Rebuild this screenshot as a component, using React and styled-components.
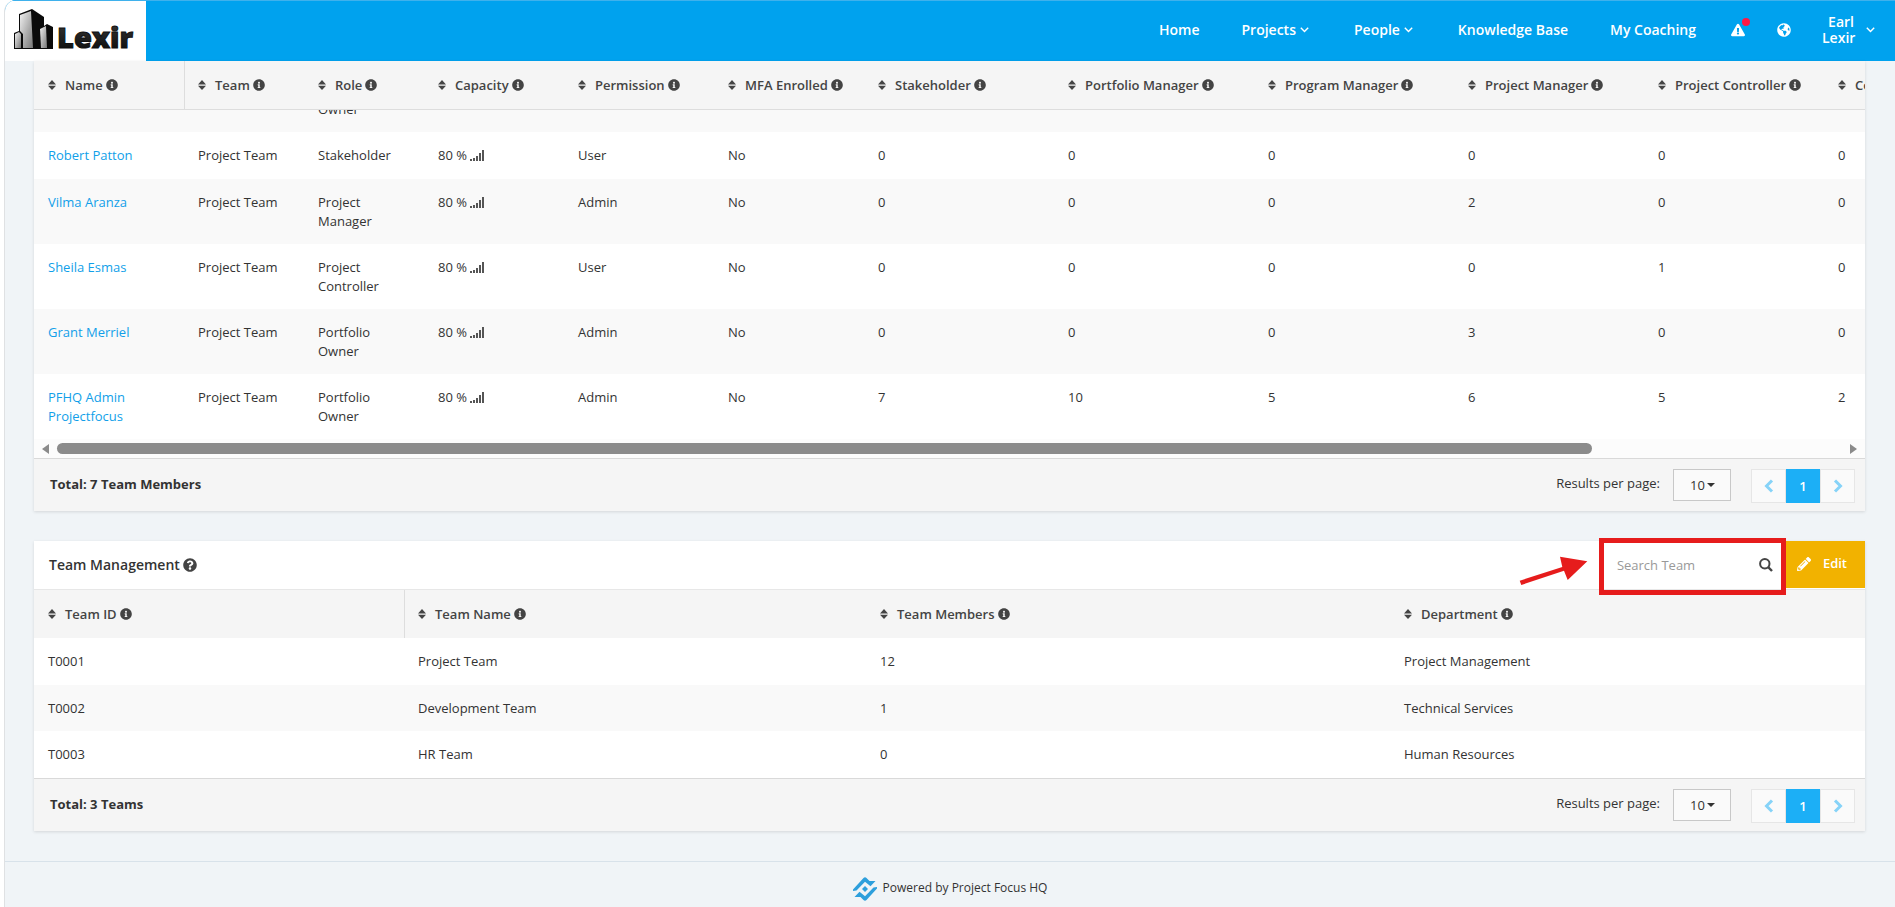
import React, { useEffect, useRef } from 'react';
import styled, { createGlobalStyle } from 'styled-components';
import {
  FaExclamationTriangle,
  FaGlobeAmericas,
  FaInfoCircle,
  FaPencilAlt,
  FaQuestionCircle,
} from 'react-icons/fa';

const GlobalStyle = createGlobalStyle`
  * {
    box-sizing: border-box;
  }
  body {
    margin: 0;
    background: #ffffff;
    color: #333333;
    font-family: "Open Sans", "Noto Sans", sans-serif;
    font-size: 13px;
    line-height: 19px;
  }
  button, input, select {
    font: inherit;
    color: inherit;
  }
  svg {
    display: block;
    flex: none;
  }
`;

const Frame = styled.div`
  display: flex;
  flex-direction: column;
  min-height: 100vh;
  margin-left: 4px;
  border-left: 1px solid #dfe1e3;
  border-top-left-radius: 12px;
  background: #f0f4f7;
  overflow: hidden;
`;

const TopBar = styled.header`
  display: flex;
  align-items: stretch;
  justify-content: space-between;
  height: 61px;
  border-top: 1px solid #3fb1ec;
  background: #00a2ee;
`;

const LogoLink = styled.a`
  display: flex;
  align-items: center;
  width: 141px;
  padding-left: 8px;
  background: #ffffff;
`;

const Nav = styled.nav`
  display: flex;
  align-items: center;
  padding: 0 20px 3px 0;
  color: #ffffff;
  font-size: 14px;
  font-weight: 600;
`;

const NavLink = styled.a`
  display: flex;
  align-items: center;
  gap: 4px;
  padding: 0 ${props => (props.$menu ? 24 : 21)}px 0 21px;
  color: #ffffff;
  text-decoration: none;
`;

const IconButton = styled.button`
  position: relative;
  margin: 0 0 0 ${props => props.$gap}px;
  padding: 0;
  border: 0;
  background: none;
  color: #ffffff;
  font-size: 14px;
`;

const AlertDot = styled.span`
  position: absolute;
  top: -5px;
  right: -5px;
  width: 8px;
  height: 8px;
  border-radius: 50%;
  background: #ff1744;
`;

const UserButton = styled.button`
  display: flex;
  align-items: center;
  gap: 12px;
  margin-left: 31px;
  padding: 0;
  border: 0;
  background: none;
  line-height: 16px;
  text-align: right;
`;

const UserName = styled.span`
  width: 32px;
`;

const Content = styled.main`
  display: flex;
  flex: 1;
  flex-direction: column;
  gap: 30px;
  padding: 0 30px 30px 29px;
`;

const Card = styled.section`
  background: #ffffff;
  box-shadow: 0 1px 3px rgba(0, 0, 0, 0.12);
`;

const CardHead = styled.div`
  display: flex;
  justify-content: space-between;
  height: 49px;
  padding-bottom: 1px;
  border-bottom: 1px solid #e7e7e7;
`;

const CardTitle = styled.h2`
  display: flex;
  align-items: center;
  gap: 3px;
  margin: 0;
  padding-left: 15px;
  font-size: 14px;
  font-weight: 600;
`;

const Actions = styled.div`
  display: flex;
`;

const SearchBox = styled.label`
  position: relative;
  display: flex;
  align-items: center;
  width: 186px;
  padding: 0 13px 0 17px;
  color: #444444;
`;

const SearchInput = styled.input`
  flex: 1;
  min-width: 0;
  padding: 2px 0 0;
  border: 0;
  outline: 0;
  background: none;

  &::placeholder {
    color: #999999;
    opacity: 1;
  }
`;

const Highlight = styled.span`
  position: absolute;
  inset: -3px 0 -7px -1px;
  border: 5px solid #e61c1c;
  pointer-events: none;
`;

const Pointer = styled.svg`
  position: absolute;
  top: 14px;
  left: -82px;
  pointer-events: none;
`;

const EditButton = styled.button`
  display: flex;
  align-items: center;
  gap: 12px;
  padding: 0 18px 2px 11px;
  border: 0;
  background: #f2b200;
  color: #ffffff;
  font-weight: 600;
`;

const Scroller = styled.div`
  overflow-x: auto;
  scrollbar-width: none;
`;

const Table = styled.table`
  display: block;
  width: ${props => props.$width};
`;

const TableHeader = styled.thead`
  display: block;
  background: #f5f5f5;
  border-bottom: ${props => (props.$line ? '1px solid #dddddd' : '0')};
`;

const TableBody = styled.tbody`
  display: block;
  max-height: 329px;
  overflow-y: auto;
  scrollbar-width: none;
`;

const Row = styled.tr`
  display: grid;
  grid-template-columns: ${props => props.$columns};
  min-height: ${props => (props.$shaded ? 46 : 47)}px;
  background: ${props => (props.$shaded ? '#f9f9f9' : '#ffffff')};
`;

const HeadRow = styled(Row)`
  min-height: 48px;
  background: none;
`;

const Th = styled.th`
  display: flex;
  align-items: center;
  gap: 3px;
  padding: 0 14px;
  color: #444444;
  font-weight: 600;
  white-space: nowrap;

  &:nth-child(2) {
    box-shadow: inset 1px 0 #dddddd;
  }
`;

const SortButton = styled.button`
  display: flex;
  align-items: center;
  gap: 9px;
  padding: 0;
  border: 0;
  background: none;
`;

const Td = styled.td`
  padding: 14px 14px 13px;
`;

const MemberLink = styled.a`
  display: block;
  width: 90px;
  color: #119fe9;
  text-decoration: none;
`;

const Capacity = styled.span`
  display: flex;
  align-items: center;
  gap: 3px;
`;

const ScrollTrack = styled.div`
  display: flex;
  align-items: center;
  gap: 8px;
  height: 19px;
  padding: 0 8px;
  background: #fcfcfc;
`;

const Track = styled.div`
  flex: 1;
`;

const Thumb = styled.div`
  width: 86%;
  height: 11px;
  border-radius: 6px;
  background: #8b8b8b;
`;

const TableFoot = styled.div`
  display: flex;
  align-items: flex-start;
  justify-content: space-between;
  height: 53px;
  padding: 10px 10px 0 16px;
  border-top: 1px solid #d9d9d9;
  background: #f5f5f5;
`;

const Total = styled.strong`
  padding-top: 6px;
`;

const Pager = styled.div`
  display: flex;
`;

const PageSize = styled.label`
  display: flex;
  gap: 13px;
  margin-right: 20px;
  line-height: 29px;
`;

const SelectBox = styled.span`
  display: grid;
  align-items: center;
  height: 32px;
  width: 58px;
  border: 1px solid #c8c8c8;
  background: #fafafa;

  & > * {
    grid-area: 1 / 1;
  }
  svg {
    margin-left: 33px;
    pointer-events: none;
  }
`;

const Select = styled.select`
  height: 30px;
  padding: 0 16px;
  border: 0;
  background: none;
  appearance: none;
`;

const PageButton = styled.button`
  display: flex;
  align-items: center;
  justify-content: center;
  width: ${props => (props.$active ? 34 : 35)}px;
  height: 34px;
  padding: 0;
  border: ${props => (props.$active ? '0' : '1px solid #e6e6e6')};
  background: ${props => (props.$active ? '#1caff6' : '#fafafa')};
  color: ${props => (props.$active ? '#ffffff' : '#86d3f8')};
  font-weight: 600;
`;

const Footer = styled.footer`
  display: flex;
  align-items: center;
  justify-content: center;
  gap: 6px;
  padding: 15px 0 6px;
  border-top: 1px solid #d8e2ea;
  font-size: 12px;
`;

const PoweredBy = styled.span`
  padding-bottom: 3px;
`;

const Logo = () => (
  <svg width="128" height="44" viewBox="0 0 128 44" role="img" aria-label="Lexir">
    <defs>
      <linearGradient id="steel" x1="0" y1="0" x2="1" y2="1">
        <stop offset="0" stopColor="#f2f2f2" />
        <stop offset="1" stopColor="#777777" />
      </linearGradient>
      <linearGradient id="ink" x1="0" y1="0" x2="0" y2="1">
        <stop offset="0" stopColor="#3c3c3c" />
        <stop offset="1" stopColor="#080808" />
      </linearGradient>
    </defs>
    <path d="M6 5 L19 0 L31 8 V17 L34 15 L40 18 V40 H1 V24 L6 22 Z" fill="#0a0a0a" />
    <path d="M7 6 L18 2 L20 39 H10 V25 L7 22 Z" fill="url(#steel)" />
    <path d="M2 25 L6 23 L8 25 V39 H2 Z" fill="url(#steel)" />
    <path d="M27 20 L33 17 L34 39 H28 Z" fill="url(#steel)" />
    <text
      x="44"
      y="39"
      fill="url(#ink)"
      stroke="#111111"
      strokeWidth="1"
      fontFamily="Open Sans, sans-serif"
      fontSize="29"
      fontWeight="800"
    >
      Lexir
    </text>
  </svg>
);

const ArrowDown = () => (
  <svg width="9" height="6" viewBox="0 0 9 6" fill="none" stroke="currentColor" strokeWidth="1.4">
    <path d="M0.8 0.8 L4.5 4.6 L8.2 0.8" />
  </svg>
);

const SortIcon = () => (
  <svg width="8" height="10" viewBox="0 0 8 10" fill="currentColor">
    <path d="M0 4.4 L4 0 L8 4.4 Z M0 5.8 H8 L4 10 Z" />
  </svg>
);

const SignalIcon = () => (
  <svg width="14" height="11" viewBox="0 0 14 11" fill="#555555">
    <path d="M0 9h2v2H0z M3 8h2v3H3z M6 6h2v5H6z M9 3h2v8H9z M12 0h2v11h-2z" />
  </svg>
);

const SearchIcon = () => (
  <svg width="14" height="14" viewBox="0 0 14 14" fill="none" stroke="currentColor">
    <circle cx="5.8" cy="5.8" r="4.7" strokeWidth="2" />
    <path d="M9.2 9.2 L13 13" strokeWidth="2.4" />
  </svg>
);

const CaretIcon = () => (
  <svg width="8" height="4" viewBox="0 0 8 4" fill="#333333">
    <path d="M0 0 H8 L4 4 Z" />
  </svg>
);

const PageArrow = ({ d }) => (
  <svg width="10" height="14" viewBox="0 0 10 14" fill="none" stroke="currentColor" strokeWidth="3">
    <path d={d} />
  </svg>
);

const FocusMark = () => (
  <svg width="24" height="24" viewBox="0 0 24 24" fill="#2d9fdc">
    <path d="M0 12.5 L10.5 1 Q12 -0.5 13.5 1 L16.5 4 L22.5 4 L17.5 9.2 L12 4.8 L3.5 13.5 L0 14 Z" />
    <path d="M24 11.5 L13.5 23 Q12 24.5 10.5 23 L7.5 20 L1.5 20 L6.5 14.8 L12 19.2 L20.5 10.5 L24 10 Z" />
    <path d="M12 9 L15 12 L12 15 L9 12 Z" />
  </svg>
);

const memberColumns = [
  'Name',
  'Team',
  'Role',
  'Capacity',
  'Permission',
  'MFA Enrolled',
  'Stakeholder',
  'Portfolio Manager',
  'Program Manager',
  'Project Manager',
  'Project Controller',
  'Contributor',
];
const memberGrid = '150px 120px 120px 140px 150px 150px 190px 200px 200px 190px 180px 1fr';

const members = [
  ['Earl Lexir', 'Portfolio Owner', 'Admin', [0, 0, 0, 0, 0, 0]],
  ['Robert Patton', 'Stakeholder', 'User', [0, 0, 0, 0, 0, 0]],
  ['Vilma Aranza', 'Project Manager', 'Admin', [0, 0, 0, 2, 0, 0]],
  ['Sheila Esmas', 'Project Controller', 'User', [0, 0, 0, 0, 1, 0]],
  ['Grant Merriel', 'Portfolio Owner', 'Admin', [0, 0, 0, 3, 0, 0]],
  ['PFHQ Admin Projectfocus', 'Portfolio Owner', 'Admin', [7, 10, 5, 6, 5, 2]],
];

const teamColumns = ['Team ID', 'Team Name', 'Team Members', 'Department'];
const teamGrid = '370fr 462fr 524fr 475fr';

const teams = [
  ['T0001', 'Project Team', 12, 'Project Management'],
  ['T0002', 'Development Team', 1, 'Technical Services'],
  ['T0003', 'HR Team', 0, 'Human Resources'],
];

const TableHead = ({ columns, grid, line }) => (
  <TableHeader $line={line}>
    <HeadRow $columns={grid}>
      {columns.map(label => (
        <Th key={label}>
          <SortButton type="button">
            <SortIcon />
            {label}
          </SortButton>
          <FaInfoCircle size={12} />
        </Th>
      ))}
    </HeadRow>
  </TableHeader>
);

const TableFooter = ({ total }) => (
  <TableFoot>
    <Total>{total}</Total>
    <Pager>
      <PageSize>
        Results per page:
        <SelectBox>
          <Select defaultValue="10">
            <option>10</option>
          </Select>
          <CaretIcon />
        </SelectBox>
      </PageSize>
      <PageButton type="button" aria-label="Previous page">
        <PageArrow d="M8 1.5 L2.5 7 L8 12.5" />
      </PageButton>
      <PageButton type="button" $active>1</PageButton>
      <PageButton type="button" aria-label="Next page">
        <PageArrow d="M2 1.5 L7.5 7 L2 12.5" />
      </PageButton>
    </Pager>
  </TableFoot>
);

const MembersCard = () => {
  const list = useRef(null);

  // the list opens at its last member
  useEffect(() => {
    list.current.scrollTop = list.current.scrollHeight;
  }, []);

  return (
    <Card>
      <Scroller>
        <Table $width="2137px">
          <TableHead columns={memberColumns} grid={memberGrid} line />
          <TableBody ref={list}>
            {members.map(([name, role, permission, counts], index) => (
              <Row key={name} $columns={memberGrid} $shaded={index % 2 === 0}>
                <Td><MemberLink href="#">{name}</MemberLink></Td>
                <Td>Project Team</Td>
                <Td>{role}</Td>
                <Td>
                  <Capacity>80 % <SignalIcon /></Capacity>
                </Td>
                <Td>{permission}</Td>
                <Td>No</Td>
                {counts.map((count, i) => (
                  <Td key={i}>{count}</Td>
                ))}
              </Row>
            ))}
          </TableBody>
        </Table>
      </Scroller>
      <ScrollTrack>
        <svg width="7" height="10" viewBox="0 0 7 10" fill="#8b8b8b"><path d="M7 0 V10 L0 5 Z" /></svg>
        <Track><Thumb /></Track>
        <svg width="7" height="10" viewBox="0 0 7 10" fill="#8b8b8b"><path d="M0 0 V10 L7 5 Z" /></svg>
      </ScrollTrack>
      <TableFooter total="Total: 7 Team Members" />
    </Card>
  );
};

const TeamsCard = () => (
  <Card>
    <CardHead>
      <CardTitle>
        Team Management <FaQuestionCircle size={14} color="#444444" />
      </CardTitle>
      <Actions>
        <SearchBox>
          <SearchInput type="text" placeholder="Search Team" aria-label="Search Team" />
          <SearchIcon />
          <Highlight />
          <Pointer width="72" height="34" viewBox="0 0 72 34" fill="#e61c1c">
            <path d="M1.7 25.7 L44.3 12 L42 1.7 L69.3 6.3 L49.7 25 L46 15.7 L3.3 30 Z" />
          </Pointer>
        </SearchBox>
        <EditButton type="button">
          <FaPencilAlt size={14} />
          Edit
        </EditButton>
      </Actions>
    </CardHead>
    <Table $width="100%">
      <TableHead columns={teamColumns} grid={teamGrid} />
      <TableBody>
        {teams.map((team, index) => (
          <Row key={team[0]} $columns={teamGrid} $shaded={index % 2 === 1}>
            {team.map((value, i) => (
              <Td key={i}>{value}</Td>
            ))}
          </Row>
        ))}
      </TableBody>
    </Table>
    <TableFooter total="Total: 3 Teams" />
  </Card>
);

const App = () => (
  <>
    <GlobalStyle />
    <Frame>
      <TopBar>
        <LogoLink href="#"><Logo /></LogoLink>
        <Nav>
          <NavLink href="#">Home</NavLink>
          <NavLink href="#" $menu>Projects <ArrowDown /></NavLink>
          <NavLink href="#" $menu>People <ArrowDown /></NavLink>
          <NavLink href="#">Knowledge Base</NavLink>
          <NavLink href="#">My Coaching</NavLink>
          <IconButton type="button" aria-label="Alerts" $gap={14}>
            <FaExclamationTriangle />
            <AlertDot />
          </IconButton>
          <IconButton type="button" aria-label="Language" $gap={32}>
            <FaGlobeAmericas />
          </IconButton>
          <UserButton type="button">
            <UserName>Earl Lexir</UserName>
            <ArrowDown />
          </UserButton>
        </Nav>
      </TopBar>
      <Content>
        <MembersCard />
        <TeamsCard />
      </Content>
      <Footer>
        <FocusMark />
        <PoweredBy>Powered by Project Focus HQ</PoweredBy>
      </Footer>
    </Frame>
  </>
);

export default App;
